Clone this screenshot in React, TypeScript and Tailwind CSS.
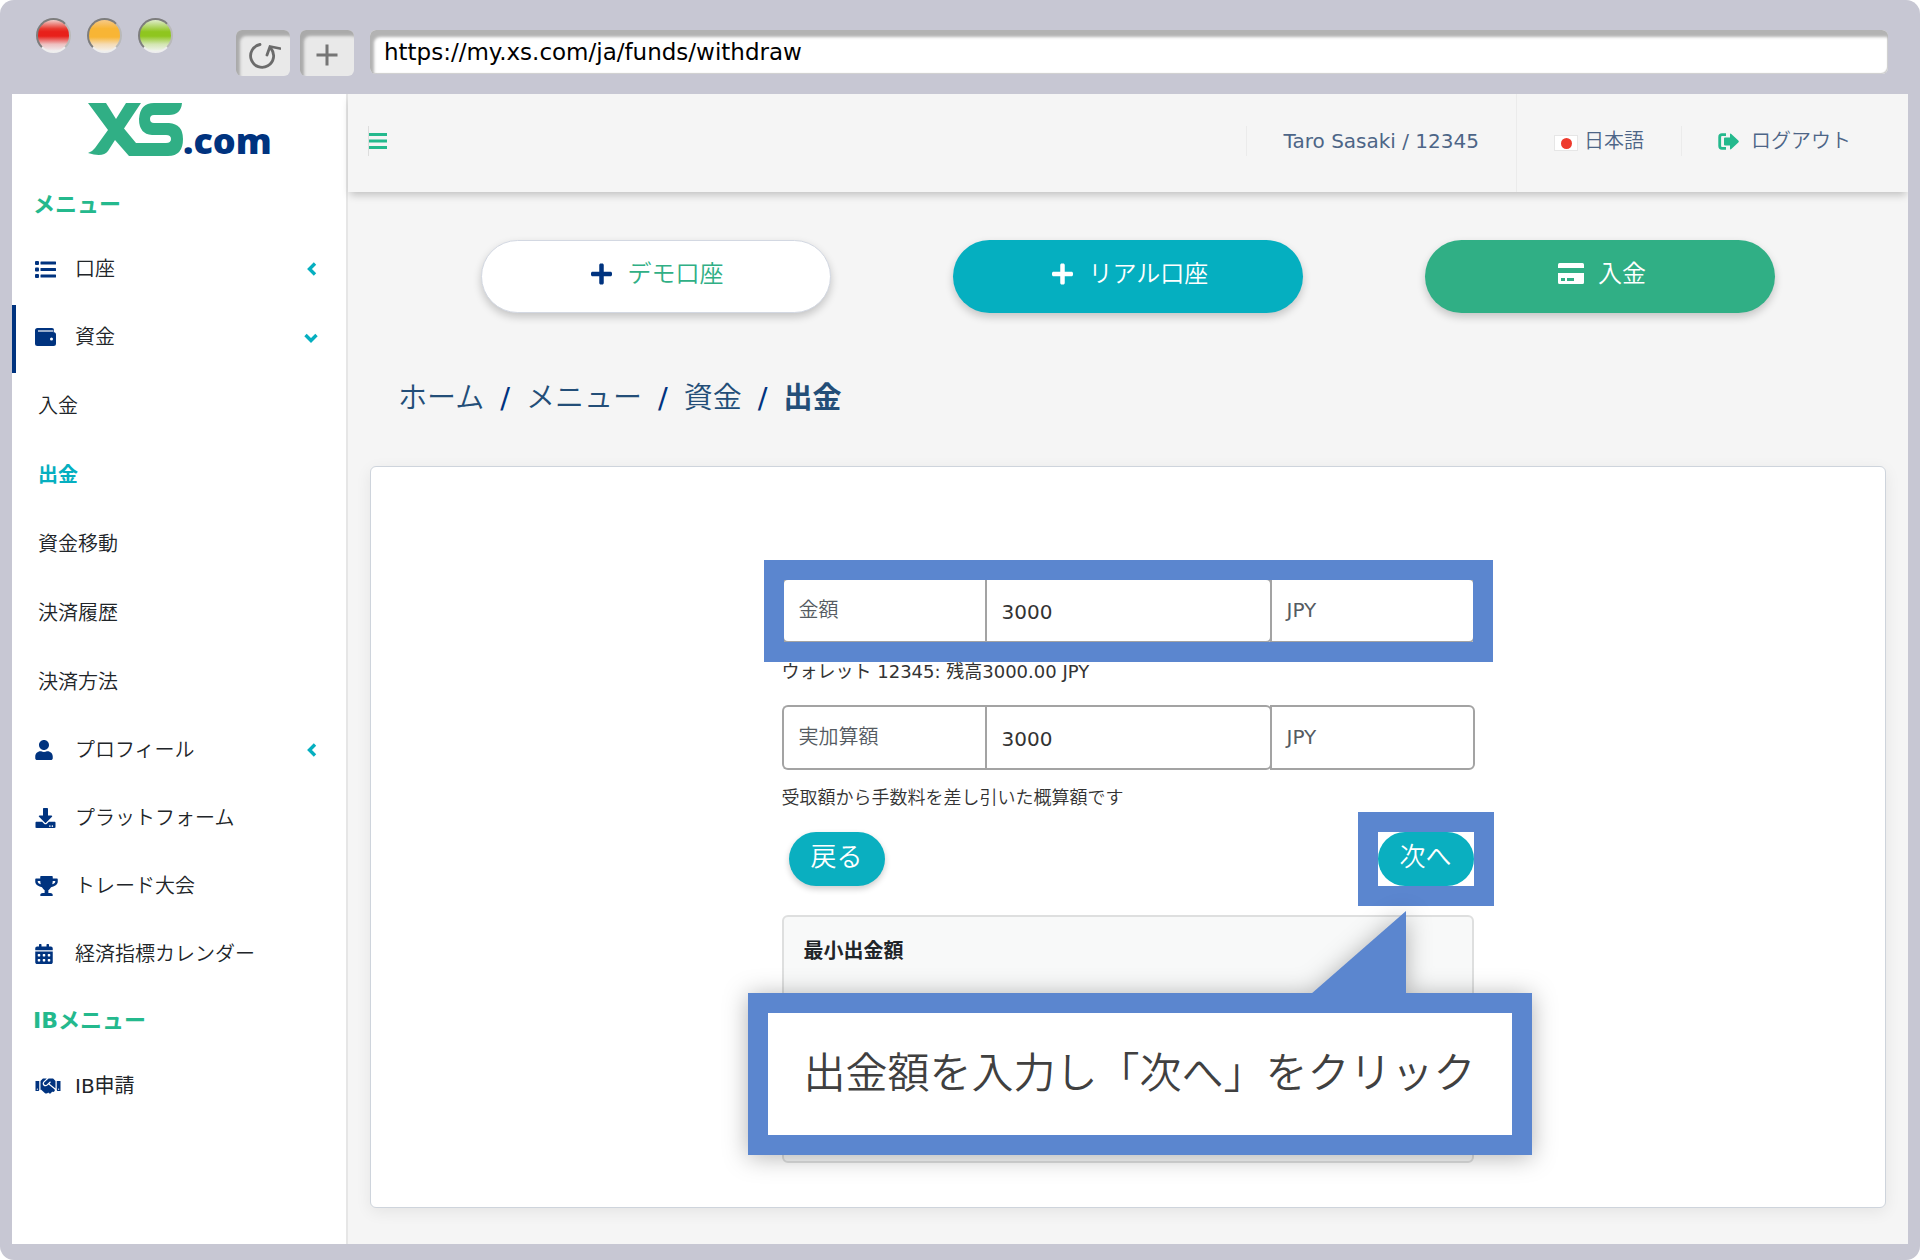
import { useState } from "react";
import { FaCalendarAlt, FaDownload, FaHandshake, FaPlus, FaTrophy, FaUser } from "react-icons/fa";

interface IconProps {
  className?: string;
}

interface MenuItem {
  label: string;
  icon: React.ComponentType<IconProps>;
  iconClass: string;
  chevron?: "left" | "down";
  active?: boolean;
  children?: { label: string; active?: boolean }[];
}

function ListIcon({ className }: IconProps) {
  return (
    <svg viewBox="0 0 21 17" className={className} fill="currentColor">
      <rect x="0" y="0" width="4" height="4" rx="1" />
      <rect x="0" y="6.500" width="4" height="4" rx="1" />
      <rect x="0" y="13" width="4" height="4" rx="1" />
      <rect x="5.500" y="0.500" width="15.500" height="3" rx="0.500" />
      <rect x="5.500" y="7" width="15.500" height="3" rx="0.500" />
      <rect x="5.500" y="13.500" width="15.500" height="3" rx="0.500" />
    </svg>
  );
}

function WalletIcon({ className }: IconProps) {
  return (
    <svg viewBox="0 0 21 18" className={className}>
      <path d="M2.500 0H17q2 0 2 2v2h-1q3 0 3 2.500v9q0 2.500-2.500 2.500h-16Q0 18 0 15.500v-13Q0 0 2.500 0Z" fill="currentColor" />
      <path d="M3 3h15.500" stroke="#ffffff" strokeWidth="1.200" />
      <circle cx="16.500" cy="11" r="1.500" fill="#ffffff" />
    </svg>
  );
}

function BarsIcon({ className }: IconProps) {
  return (
    <svg viewBox="0 0 18 17" className={className} fill="currentColor">
      <rect width="18" height="3" />
      <rect y="6.500" width="18" height="3" />
      <rect y="13" width="18" height="3" />
    </svg>
  );
}

function CardIcon({ className }: IconProps) {
  return (
    <svg viewBox="0 0 26 21" className={className} fill="currentColor">
      <path d="M1.500 0h23Q26 0 26 1.500V5H0V1.500Q0 0 1.500 0Z" />
      <path
        fillRule="evenodd"
        d="M0 10h26v9.500q0 1.500-1.500 1.500h-23Q0 21 0 19.500ZM3 15v3h4v-3ZM9 15v3h7v-3Z"
      />
    </svg>
  );
}

function LogoutIcon({ className }: IconProps) {
  return (
    <svg viewBox="0 0 21 17" className={className}>
      <path d="M8 1.700H4Q1.700 1.700 1.700 4v9q0 2.300 2.300 2.300h4" fill="none" stroke="currentColor" strokeWidth="2.800" />
      <path d="M6 5.500q0-1 1-1h5V1.500q0-1.500 1.300-0.500l7 6.500q1 1 0 2l-7 6.500q-1.300 1-1.300-0.500v-3H7q-1 0-1-1Z" fill="currentColor" />
    </svg>
  );
}

function ChevronIcon({ direction }: { direction: "left" | "down" }) {
  return (
    <svg viewBox="0 0 14 14" className="h-[14px] w-[14px] text-[#05afc0]" fill="none" stroke="currentColor" strokeWidth="3.400">
      <path d={direction === "left" ? "M11 1.500 5.500 7l5.500 5.500" : "M1.500 5 7 10.500 12.500 5"} />
    </svg>
  );
}

const mainMenu: MenuItem[] = [
  { label: "口座", icon: ListIcon, iconClass: "h-[17px] w-[21px]", chevron: "left" },
  {
    label: "資金",
    icon: WalletIcon,
    iconClass: "h-[18px] w-[21px]",
    chevron: "down",
    active: true,
    children: [
      { label: "入金" },
      { label: "出金", active: true },
      { label: "資金移動" },
      { label: "決済履歴" },
      { label: "決済方法" },
    ],
  },
  { label: "プロフィール", icon: FaUser, iconClass: "h-5 w-[18px]", chevron: "left" },
  { label: "プラットフォーム", icon: FaDownload, iconClass: "h-5 w-[21px]" },
  { label: "トレード大会", icon: FaTrophy, iconClass: "h-5 w-[23px]" },
  { label: "経済指標カレンダー", icon: FaCalendarAlt, iconClass: "h-5 w-[18px]" },
];

const ibMenu: MenuItem[] = [{ label: "IB申請", icon: FaHandshake, iconClass: "h-5 w-[26px]" }];

function BrowserBar() {
  return (
    <div className="flex h-[94px] items-start pl-9 pr-8">
      <div className="mt-[18px] flex gap-4">
        <span className="h-[35px] w-[35px] rounded-full border-2 border-[#7d7d7d] border-b-[#eeeeee] border-r-[#b9b9b9] bg-[linear-gradient(#f0cfcb,#e83a30_28%,#e8201b_38%,#e8201b_52%,#eebfbf_78%,#f0eef0)]" />
        <span className="h-[35px] w-[35px] rounded-full border-2 border-[#7d7d7d] border-b-[#eeeeee] border-r-[#b9b9b9] bg-[linear-gradient(#f6c987,#f8b535_28%,#f8b535_55%,#f5dbb4_78%,#f4f0ea)]" />
        <span className="h-[35px] w-[35px] rounded-full border-2 border-[#7d7d7d] border-b-[#eeeeee] border-r-[#b9b9b9] bg-[linear-gradient(#dfeccb,#a3cf49_28%,#8fc61f_38%,#8fc61f_52%,#d3e6b2_78%,#eff3ec)]" />
      </div>
      <div className="ml-[63px] mt-[30px] flex gap-[10px]">
        <button
          aria-label="再読み込み"
          className="flex h-[46px] w-[54px] items-center justify-center rounded-md bg-[#e9e9e9] shadow-[inset_4px_6px_3px_#aaaaaa]"
        >
          <svg viewBox="0 0 32 28" className="ml-1 mt-1 h-7 w-8" fill="none" stroke="#6b6b6b" strokeWidth="2.800">
            <path d="M11 3.500a11.500 11.500 0 1 0 11 4" strokeLinecap="round" />
            <path d="M18 14l3-8.500 10 2" strokeLinecap="round" />
          </svg>
        </button>
        <button
          aria-label="新しいタブ"
          className="flex h-[46px] w-[54px] items-center justify-center rounded-md bg-[#e9e9e9] shadow-[inset_4px_6px_3px_#aaaaaa]"
        >
          <svg viewBox="0 0 22 22" className="mt-1 h-[22px] w-[22px]" stroke="#757575" strokeWidth="3">
            <path d="M11 0.500v21M0.500 11h21" />
          </svg>
        </button>
      </div>
      <input
        type="text"
        aria-label="URL"
        defaultValue="https://my.xs.com/ja/funds/withdraw"
        className="ml-4 mt-[30px] h-11 min-w-0 flex-1 rounded-md bg-white px-[14px] text-[23px] font-normal text-black shadow-[inset_4px_7px_3px_#b3b3b3,inset_-1px_-1px_1px_#cccccc] outline-none"
      />
    </div>
  );
}

function Logo() {
  return (
    <a href="#" aria-label="XS.com" className="flex h-20 items-start pl-[76px] pt-2">
      <svg viewBox="0 0 95 53" className="mt-px h-[53px] w-[95px]" fill="#30af85">
        <path d="M0 0h18l10 16L38 0h15L36 25.500 48 40h30q5 0 5-4t-5-4H64Q51 31 51 16 52 0 66 0h28q-1 12-13 12H66q-4 0-4 4t4 4h15q14 1 14 16 0 17-15 17H41L27 37l-7 11q-5 7-20 2 4-1 7-5l13-18Z" />
      </svg>
      <span className="font-['Open_Sans',sans-serif] text-[36px] font-extrabold leading-[78px] text-[#00337f]">.com</span>
    </a>
  );
}

function SideMenu({ items }: { items: MenuItem[] }) {
  return (
    <ul>
      {items.map((item) => {
        const Icon = item.icon;
        return (
          <li key={item.label}>
            <a
              href="#"
              className={`flex h-[68px] items-center border-l-4 pb-1 pl-[19px] pr-7 ${
                item.active ? "border-[#00337f]" : "border-transparent"
              }`}
            >
              <span className="flex w-10 items-center">
                <Icon className={`${item.iconClass} text-[#00337f]`} />
              </span>
              <span className="flex-1">{item.label}</span>
              {item.chevron && <ChevronIcon direction={item.chevron} />}
            </a>
            {item.children && (
              <ul>
                {item.children.map((child) => (
                  <li key={child.label}>
                    <a
                      href="#"
                      className={`flex h-[69px] items-center pb-1 pl-[26px] ${
                        child.active ? "font-bold text-[#05afc0]" : ""
                      }`}
                    >
                      {child.label}
                    </a>
                  </li>
                ))}
              </ul>
            )}
          </li>
        );
      })}
    </ul>
  );
}

function Header() {
  return (
    <header className="relative z-10 flex h-[98px] items-stretch bg-[#f5f5f5] text-[#4d6587] shadow-[0_5px_8px_-2px_rgba(0,0,0,0.22)]">
      <div className="flex flex-1 items-center pb-1 pl-5">
        <button aria-label="メニュー" className="flex h-[30px] items-center border-l border-[#dddddd]">
          <BarsIcon className="h-[17px] w-[18px] text-[#24b98d]" />
        </button>
      </div>
      <div className="flex items-center border-r border-[#ebebeb] pb-1">
        <a href="#" className="flex h-[30px] items-center border-l border-[#ebebeb] px-[37px] font-normal">
          Taro Sasaki / 12345
        </a>
      </div>
      <div className="flex items-center pb-1">
        <button className="flex h-[30px] items-center gap-1.5 border-r border-[#ebebeb] px-[37px]">
          <span className="mt-1 flex h-4 w-6 items-center justify-center border border-[#e6e6e6] bg-white">
            <span className="h-[11px] w-[11px] rounded-full bg-[#ee3a2c]" />
          </span>
          日本語
        </button>
        <a href="#" className="flex h-[30px] items-center gap-3 pl-9 pr-[57px]">
          <LogoutIcon className="h-[17px] w-[21px] text-[#24b98d]" />
          ログアウト
        </a>
      </div>
    </header>
  );
}

function QuickActions() {
  return (
    <div className="grid grid-cols-3 px-[72px] text-2xl">
      <button className="mx-auto flex h-[73px] w-[350px] items-center justify-center gap-4 rounded-full border border-[#d3d8e2] bg-white pb-1.5 pl-0.5 text-[#30af85] shadow-[0_4px_8px_rgba(0,0,0,0.2)]">
        <FaPlus className="h-6 w-[21px] text-[#00337f]" />
        デモ口座
      </button>
      <button className="mx-auto flex h-[73px] w-[350px] items-center justify-center gap-4 rounded-full bg-[#05afc0] pb-1.5 pl-1 text-white shadow-[0_4px_8px_rgba(0,0,0,0.2)]">
        <FaPlus className="h-6 w-[21px]" />
        リアル口座
      </button>
      <button className="mx-auto flex h-[73px] w-[350px] items-center justify-center gap-[14px] rounded-full bg-[#30af85] pb-1.5 pl-1 text-white shadow-[0_4px_8px_rgba(0,0,0,0.2)]">
        <CardIcon className="h-[21px] w-[26px]" />
        入金
      </button>
    </div>
  );
}

interface AmountRowProps {
  id: string;
  label: string;
  value: string;
  onChange: (value: string) => void;
}

function AmountRow({ id, label, value, onChange }: AmountRowProps) {
  return (
    <div className="flex h-[65px]">
      <label
        htmlFor={id}
        className="flex w-[203px] items-center rounded-l-md border-2 border-r-0 border-[#a3a3a3] bg-white pb-0.5 pl-[15px] text-[#555b62]"
      >
        {label}
      </label>
      <input
        id={id}
        type="text"
        value={value}
        onChange={(e) => onChange(e.target.value)}
        className="min-w-0 flex-1 rounded-r-md border-2 border-[#a3a3a3] bg-white px-[15px] pt-0.5 font-normal text-[#333333] outline-none"
      />
      <span className="-ml-0.5 flex w-[205px] items-center rounded-r-md border-2 border-[#a3a3a3] bg-white pb-0.5 pl-[15px] font-normal text-[#555b62]">
        JPY
      </span>
    </div>
  );
}

function Callout() {
  return (
    <div className="absolute -left-9 -right-[60px] top-[76px] h-[162px] drop-shadow-[0_2px_12px_rgba(0,0,0,0.3)]">
      <svg viewBox="0 0 95 83" className="absolute -top-[82px] right-[126px] h-[83px] w-[95px]" fill="#5b86cf">
        <path d="M95 0v83H0Z" />
      </svg>
      <p className="flex h-full items-center justify-center whitespace-nowrap border-[20px] border-[#5b86cf] bg-white text-[42px] text-[#404040]">
        出金額を入力し「次へ」をクリック
      </p>
    </div>
  );
}

function WithdrawForm() {
  const [amount, setAmount] = useState("3000");
  const [netAmount, setNetAmount] = useState("3000");

  return (
    <form className="mx-auto w-full max-w-[693px]" onSubmit={(e) => e.preventDefault()}>
      <div className="relative">
        <AmountRow id="amount" label="金額" value={amount} onChange={setAmount} />
        <div className="pointer-events-none absolute -inset-x-[18px] -bottom-[19px] -top-[18px] border-[20px] border-[#5b86cf]" />
      </div>
      <p className="flex h-[62px] items-center pb-1 text-lg font-normal text-[#333333]">
        ウォレット 12345: 残高3000.00 JPY
      </p>
      <AmountRow id="net-amount" label="実加算額" value={netAmount} onChange={setNetAmount} />
      <p className="flex h-[62px] items-center pb-1.5 text-lg text-[#333333]">
        受取額から手数料を差し引いた概算額です
      </p>
      <div className="flex items-center justify-between pl-[7px] pr-px">
        <button
          type="button"
          className="h-[54px] w-24 rounded-full bg-[#0aafc0] pb-1 text-[26px] text-white shadow-[0_3px_6px_rgba(0,0,0,0.2)]"
        >
          戻る
        </button>
        <div className="relative">
          <button type="submit" className="h-[54px] w-24 rounded-full bg-[#0aafc0] pb-1 text-[26px] text-white">
            次へ
          </button>
          <div className="pointer-events-none absolute -inset-5 border-[20px] border-[#5b86cf]" />
        </div>
      </div>
      <section className="relative mr-px mt-[29px] h-[248px] rounded-md border-2 border-[#dedfdf] bg-[#f8f9f9] px-5 pt-5">
        <h2 className="font-bold text-[#212529]">最小出金額</h2>
        <Callout />
      </section>
    </form>
  );
}

export default function App() {
  return (
    <div className="bg-white font-['DejaVu_Sans','Noto_Sans_CJK_JP',sans-serif] text-xl font-[350] text-[#212529]">
      <div className="flex min-h-screen flex-col rounded-[14px] bg-[#c7c7d3]">
        <BrowserBar />
        <div className="mx-3 mb-4 flex flex-1 overflow-hidden bg-white">
          <aside className="flex w-[336px] shrink-0 flex-col border-r-2 border-[#e6e6e6] bg-white">
            <Logo />
            <h2 className="flex h-[63px] items-center pl-[21px] text-[22px] font-bold text-[#24b98d]">メニュー</h2>
            <SideMenu items={mainMenu} />
            <h2 className="flex h-16 items-center pb-0.5 pl-[21px] text-[22px] font-bold text-[#24b98d]">IBメニュー</h2>
            <div className="font-normal">
              <SideMenu items={ibMenu} />
            </div>
          </aside>
          <main className="flex min-w-0 flex-1 flex-col bg-[#f5f5f5]">
            <Header />
            <div className="flex flex-1 flex-col px-[22px] pb-9 pt-12">
              <div className="-mx-[22px]">
                <QuickActions />
              </div>
              <nav aria-label="breadcrumb" className="mt-[57px] px-7">
                <ol className="flex h-14 items-center gap-4 text-[29px] text-[#234e78]">
                  <li>
                    <a href="#">ホーム</a>
                  </li>
                  <li className="font-normal text-[#00337f]">/</li>
                  <li>
                    <a href="#">メニュー</a>
                  </li>
                  <li className="font-normal text-[#00337f]">/</li>
                  <li>
                    <a href="#">資金</a>
                  </li>
                  <li className="font-normal text-[#00337f]">/</li>
                  <li className="font-bold">出金</li>
                </ol>
              </nav>
              <div className="mt-10 flex-1 rounded-md border border-[#ced4dc] bg-white pb-[43px] pt-[111px] shadow-[0_4px_16px_rgba(0,0,0,0.07)]">
                <WithdrawForm />
              </div>
            </div>
          </main>
        </div>
      </div>
    </div>
  );
}
